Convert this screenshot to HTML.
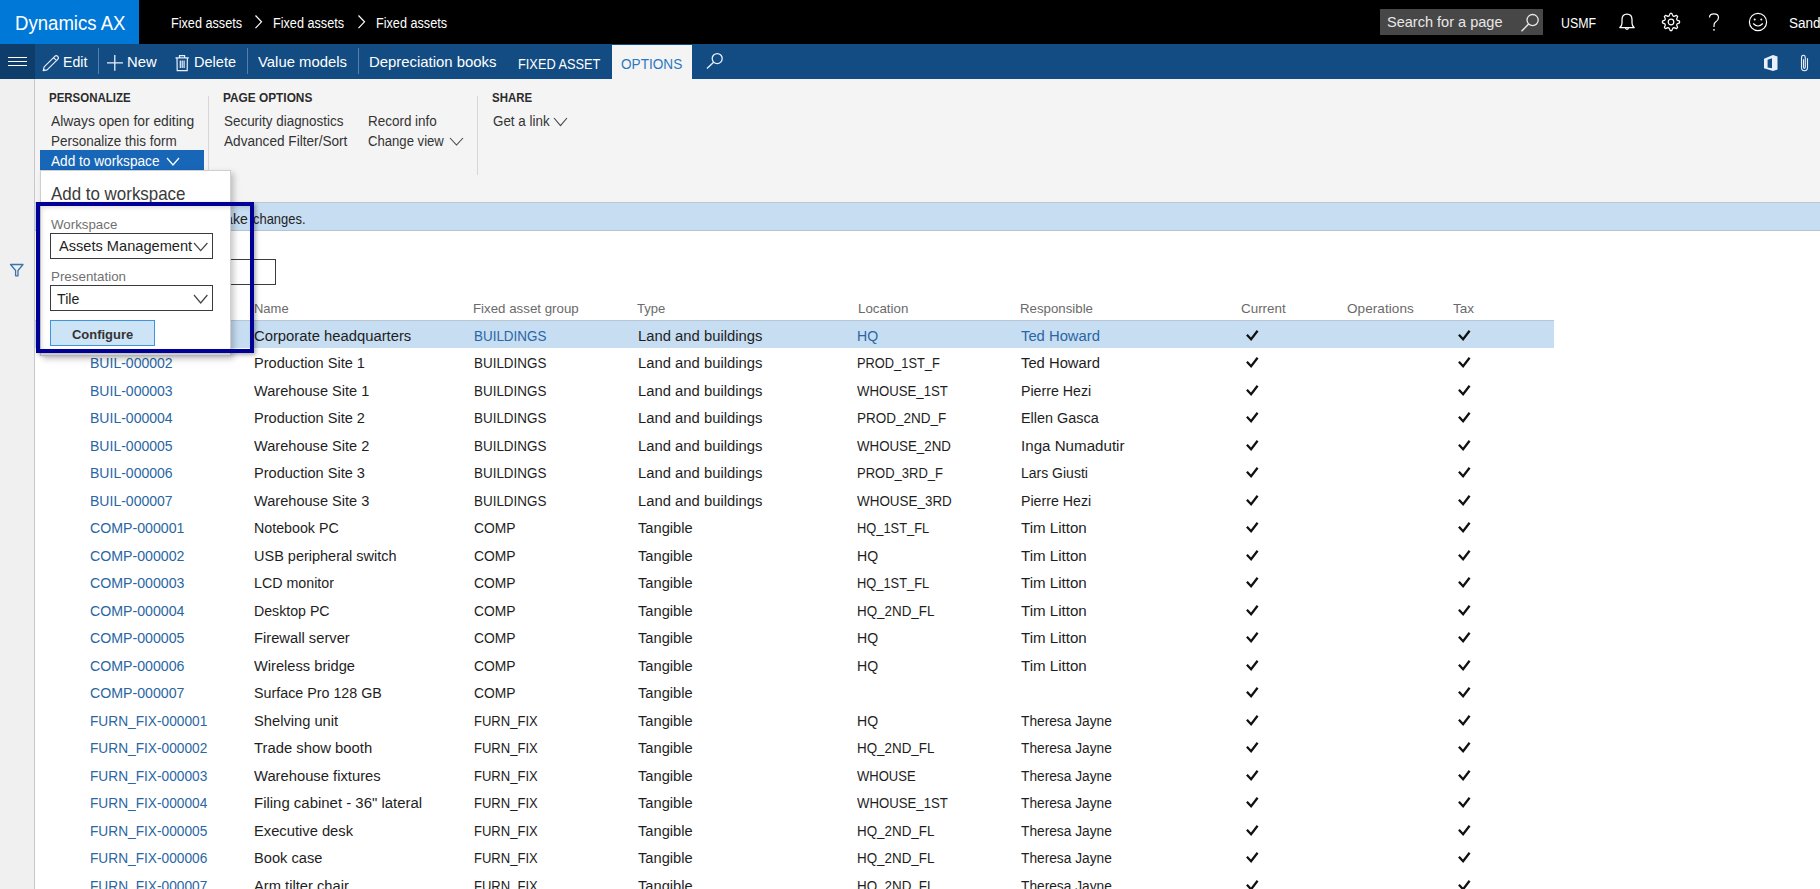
<!DOCTYPE html>
<html><head><meta charset="utf-8">
<style>
*{margin:0;padding:0;box-sizing:border-box}
html,body{width:1820px;height:889px;overflow:hidden;background:#fff;font-family:"Liberation Sans",sans-serif;color:#222}
.a{position:absolute;white-space:nowrap}
svg.a{display:block;overflow:visible}

</style></head><body>
<div class="a" style="left:0px;top:0px;width:1820px;height:44px;background:#000;"></div>
<div class="a" style="left:0px;top:0px;width:139px;height:44px;background:#0078d7;"></div>
<div class="a" style="left:14.50px;top:10.57px;font-size:20px;line-height:25px;transform:scaleX(0.9291);transform-origin:0 0;color:#fff;">Dynamics AX</div>
<div class="a" style="left:170.60px;top:14.15px;font-size:14px;line-height:18px;transform:scaleX(0.9035);transform-origin:0 0;color:#fff;">Fixed assets</div>
<div class="a" style="left:273.40px;top:14.15px;font-size:14px;line-height:18px;transform:scaleX(0.9035);transform-origin:0 0;color:#fff;">Fixed assets</div>
<div class="a" style="left:376.40px;top:14.15px;font-size:14px;line-height:18px;transform:scaleX(0.9035);transform-origin:0 0;color:#fff;">Fixed assets</div>
<svg class="a" style="left:253.5px;top:14px;" width="9" height="16" viewBox="0 0 9 16"><path d="M1.5 1.5 L7.5 7.8 L1.5 14.2" fill="none" stroke="#fff" stroke-width="1.2"/></svg>
<svg class="a" style="left:356.5px;top:14px;" width="9" height="16" viewBox="0 0 9 16"><path d="M1.5 1.5 L7.5 7.8 L1.5 14.2" fill="none" stroke="#fff" stroke-width="1.2"/></svg>
<div class="a" style="left:1380px;top:9px;width:163px;height:26px;background:#474747;"></div>
<div class="a" style="left:1386.50px;top:12.30px;font-size:15px;line-height:19px;transform:scaleX(0.9686);transform-origin:0 0;color:#e8e8e8;">Search for a page</div>
<svg class="a" style="left:1518px;top:11px;" width="22" height="22" viewBox="0 0 22 22"><circle cx="14.6" cy="9.1" r="5.6" fill="none" stroke="#e8e8e8" stroke-width="1.3"/><path d="M10.6 13.1 L3.5 20.2" stroke="#e8e8e8" stroke-width="1.4"/></svg>
<div class="a" style="left:1561.00px;top:14.15px;font-size:14px;line-height:18px;transform:scaleX(0.8824);transform-origin:0 0;color:#fff;">USMF</div>
<svg class="a" style="left:1617px;top:11px;" width="20" height="22" viewBox="0 0 20 22"><path d="M2.8 16.6 Q5 15.2 5 12 L5 8.6 Q5 3.2 10 3.2 Q15 3.2 15 8.6 L15 12 Q15 15.2 17.2 16.6 Z" fill="none" stroke="#fff" stroke-width="1.25" stroke-linejoin="round"/><path d="M8.4 17.2 Q10 19.6 11.6 17.2" fill="none" stroke="#fff" stroke-width="1.25"/></svg>
<svg class="a" style="left:1661px;top:12px;" width="20" height="20" viewBox="0 0 20 20"><polygon points="9.16,1.44 10.84,1.44 11.86,3.88 13.02,4.36 15.46,3.35 16.65,4.54 15.64,6.98 16.12,8.14 18.56,9.16 18.56,10.84 16.12,11.86 15.64,13.02 16.65,15.46 15.46,16.65 13.02,15.64 11.86,16.12 10.84,18.56 9.16,18.56 8.14,16.12 6.98,15.64 4.54,16.65 3.35,15.46 4.36,13.02 3.88,11.86 1.44,10.84 1.44,9.16 3.88,8.14 4.36,6.98 3.35,4.54 4.54,3.35 6.98,4.36 8.14,3.88" fill="none" stroke="#fff" stroke-width="1.2" stroke-linejoin="round"/><circle cx="10" cy="10" r="2.8" fill="none" stroke="#fff" stroke-width="1.2"/></svg>
<svg class="a" style="left:1706px;top:12px;" width="16" height="20" viewBox="0 0 16 20"><path d="M3.5 5.5 Q3.5 1.8 8 1.8 Q12.5 1.8 12.5 5.6 Q12.5 8.2 9.6 10 Q8 11 8 13.5 L8 15" fill="none" stroke="#fff" stroke-width="1.2"/><circle cx="8" cy="17.8" r="0.9" fill="#fff"/></svg>
<svg class="a" style="left:1748px;top:12px;" width="20" height="20" viewBox="0 0 20 20"><circle cx="10" cy="10" r="8.6" fill="none" stroke="#fff" stroke-width="1.2"/><circle cx="6.7" cy="7.6" r="1" fill="#fff"/><circle cx="13.3" cy="7.6" r="1" fill="#fff"/><path d="M5.2 11.5 Q10 16.5 14.8 11.5" fill="none" stroke="#fff" stroke-width="1.2"/></svg>
<div class="a" style="left:1788.80px;top:14.15px;font-size:14px;line-height:18px;transform:scaleX(0.9644);transform-origin:0 0;color:#fff;">Sandy</div>
<div class="a" style="left:0px;top:44px;width:1820px;height:35px;background:#134c83;"></div>
<div class="a" style="left:0px;top:44px;width:35px;height:35px;background:#0f3d6b;"></div>
<div class="a" style="left:8px;top:57.0px;width:19px;height:1.3px;background:#fff;"></div>
<div class="a" style="left:8px;top:60.9px;width:19px;height:1.3px;background:#fff;"></div>
<div class="a" style="left:8px;top:64.9px;width:19px;height:1.3px;background:#fff;"></div>
<svg class="a" style="left:41px;top:53px;" width="20" height="20" viewBox="0 0 20 20"><g transform="translate(2.2,17.7) rotate(-44.5)"><path d="M0 0 L3.4 -2.1 L18.3 -2.1 Q20.4 -2.1 20.4 0 Q20.4 2.1 18.3 2.1 L3.4 2.1 Z M16.6 -2.1 L16.6 2.1" fill="none" stroke="#e8f0ff" stroke-width="1.15" stroke-linejoin="round"/><path d="M0 0 L2 -1.2 L2 1.2 Z" fill="#e8f0ff"/></g></svg>
<div class="a" style="left:63.30px;top:52.20px;font-size:15px;line-height:19px;transform:scaleX(0.9401);transform-origin:0 0;color:#fff;">Edit</div>
<div class="a" style="left:98px;top:48px;width:1px;height:26px;background:#5281ad;"></div>
<svg class="a" style="left:105px;top:53px;" width="20" height="20" viewBox="0 0 20 20"><path d="M2 9.8 L18 9.8 M9.8 2 L9.8 17.8" stroke="#e8f0ff" stroke-width="1.3"/></svg>
<div class="a" style="left:126.60px;top:52.20px;font-size:15px;line-height:19px;transform:scaleX(0.9864);transform-origin:0 0;color:#fff;">New</div>
<svg class="a" style="left:174px;top:53px;" width="16" height="20" viewBox="0 0 16 20"><path d="M1.5 4.8 L14.8 4.8 M5.5 4.8 L5.5 2.6 L10.6 2.6 L10.6 4.8 M3 4.8 L3.2 17.6 L13.2 17.6 L13.4 4.8 M6.3 7.5 L6.3 15 M8.2 7.5 L8.2 15 M10.1 7.5 L10.1 15" fill="none" stroke="#e8f0ff" stroke-width="1.2"/></svg>
<div class="a" style="left:194.40px;top:52.20px;font-size:15px;line-height:19px;transform:scaleX(0.9686);transform-origin:0 0;color:#fff;">Delete</div>
<div class="a" style="left:247px;top:48px;width:1px;height:26px;background:#5281ad;"></div>
<div class="a" style="left:258.10px;top:52.20px;font-size:15px;line-height:19px;transform:scaleX(0.9914);transform-origin:0 0;color:#fff;">Value models</div>
<div class="a" style="left:357.5px;top:48px;width:1px;height:26px;background:#5281ad;"></div>
<div class="a" style="left:369.10px;top:52.20px;font-size:15px;line-height:19px;transform:scaleX(0.9929);transform-origin:0 0;color:#fff;">Depreciation books</div>
<div class="a" style="left:517.80px;top:55.15px;font-size:14px;line-height:18px;transform:scaleX(0.9130);transform-origin:0 0;color:#fff;">FIXED ASSET</div>
<div class="a" style="left:612px;top:45px;width:80px;height:34px;background:#f4f4f4;"></div>
<div class="a" style="left:621.00px;top:55.15px;font-size:14px;line-height:18px;transform:scaleX(0.9713);transform-origin:0 0;color:#2a78c2;">OPTIONS</div>
<svg class="a" style="left:704px;top:50px;" width="22" height="22" viewBox="0 0 22 22"><circle cx="13.2" cy="8.6" r="5.0" fill="none" stroke="#e8f0ff" stroke-width="1.3"/><path d="M9.6 12.2 L3 18.4" stroke="#e8f0ff" stroke-width="1.4"/></svg>
<svg class="a" style="left:1762px;top:53px;" width="18" height="20" viewBox="0 0 18 20"><path fill="#e8f0ff" fill-rule="evenodd" d="M2 5.8 L11 2 L15.5 3.4 L15.5 16.6 L11 18 L2 15.3 Z M5.6 6.8 L10 5.3 L10 15.2 L5.6 14.4 Z"/></svg>
<svg class="a" style="left:1799px;top:53px;" width="12" height="20" viewBox="0 0 12 20"><path d="M8.5 5.2 L8.5 14.5 Q8.5 17.7 5.5 17.7 Q2.5 17.7 2.5 14.5 L2.5 5 Q2.5 2.2 4.4 2.2 Q6.3 2.2 6.3 5 L6.3 13.8 Q6.3 15.4 5.4 15.4 Q4.5 15.4 4.5 13.8 L4.5 6.3" fill="none" stroke="#e8f0ff" stroke-width="1.1"/></svg>
<div class="a" style="left:0px;top:79px;width:1820px;height:123px;background:#f4f4f4;"></div>
<div class="a" style="left:0px;top:79px;width:34px;height:810px;background:#f0f0f0;"></div>
<div class="a" style="left:34px;top:79px;width:1px;height:810px;background:#c8c8c8;"></div>
<div class="a" style="left:49.30px;top:89.67px;font-size:12.5px;line-height:16px;transform:scaleX(0.9190);transform-origin:0 0;color:#2b2b2b;font-weight:bold;">PERSONALIZE</div>
<div class="a" style="left:50.60px;top:112.15px;font-size:14px;line-height:18px;transform:scaleX(0.9893);transform-origin:0 0;color:#333;">Always open for editing</div>
<div class="a" style="left:50.60px;top:132.15px;font-size:14px;line-height:18px;transform:scaleX(0.9616);transform-origin:0 0;color:#333;">Personalize this form</div>
<div class="a" style="left:40px;top:150px;width:164px;height:20px;background:#1766b8;"></div>
<div class="a" style="left:50.60px;top:152.15px;font-size:14px;line-height:18px;transform:scaleX(0.9750);transform-origin:0 0;color:#fff;">Add to workspace</div>
<svg class="a" style="left:165.5px;top:157.2px;" width="14" height="9" viewBox="0 0 14 9"><path d="M1 1 L7.0 8 L13 1" fill="none" stroke="#fff" stroke-width="1.3"/></svg>
<div class="a" style="left:207.5px;top:96px;width:1px;height:79px;background:#d6d6d6;"></div>
<div class="a" style="left:223.00px;top:89.67px;font-size:12.5px;line-height:16px;transform:scaleX(0.9477);transform-origin:0 0;color:#2b2b2b;font-weight:bold;">PAGE OPTIONS</div>
<div class="a" style="left:224.00px;top:112.15px;font-size:14px;line-height:18px;transform:scaleX(0.9590);transform-origin:0 0;color:#333;">Security diagnostics</div>
<div class="a" style="left:224.00px;top:132.15px;font-size:14px;line-height:18px;transform:scaleX(0.9729);transform-origin:0 0;color:#333;">Advanced Filter/Sort</div>
<div class="a" style="left:368.40px;top:112.15px;font-size:14px;line-height:18px;transform:scaleX(0.9610);transform-origin:0 0;color:#333;">Record info</div>
<div class="a" style="left:368.40px;top:132.15px;font-size:14px;line-height:18px;transform:scaleX(0.9365);transform-origin:0 0;color:#333;">Change view</div>
<svg class="a" style="left:448.9px;top:137.2px;" width="15" height="9" viewBox="0 0 15 9"><path d="M1 1 L7.5 8 L14 1" fill="none" stroke="#444" stroke-width="1.1"/></svg>
<div class="a" style="left:477px;top:96px;width:1px;height:79px;background:#d6d6d6;"></div>
<div class="a" style="left:491.80px;top:89.67px;font-size:12.5px;line-height:16px;transform:scaleX(0.9164);transform-origin:0 0;color:#2b2b2b;font-weight:bold;">SHARE</div>
<div class="a" style="left:493.40px;top:112.15px;font-size:14px;line-height:18px;transform:scaleX(0.9571);transform-origin:0 0;color:#333;">Get a link</div>
<svg class="a" style="left:553.2px;top:116.5px;" width="15" height="9.6" viewBox="0 0 15 9.6"><path d="M1 1 L7.5 8.6 L14 1" fill="none" stroke="#444" stroke-width="1.1"/></svg>
<div class="a" style="left:35px;top:202px;width:1785px;height:28px;background:#c7ddf2;"></div>
<div class="a" style="left:35px;top:229.5px;width:1785px;height:1px;background:#b4c4d2;"></div>
<div class="a" style="left:35px;top:202px;width:1785px;height:1px;background:#bcc6d0;"></div>
<div class="a" style="left:253.00px;top:209.97px;font-size:14.5px;line-height:18px;transform:scaleX(0.8921);transform-origin:0 0;color:#222;">changes.</div>
<div class="a" style="left:134.70px;top:209.97px;font-size:14.5px;line-height:18px;transform:scaleX(0.9721);transform-origin:0 0;color:#222;">Click Edit to make</div>
<div class="a" style="left:35px;top:231px;width:1785px;height:658px;background:#fff;"></div>
<svg class="a" style="left:9px;top:263px;" width="16" height="15" viewBox="0 0 16 15"><path d="M1.5 1.5 L14 1.5 L9 7.5 L9 12.8 L6.6 12.8 L6.6 7.5 Z" fill="none" stroke="#3a74ad" stroke-width="1.3" stroke-linejoin="round"/></svg>
<div class="a" style="left:50px;top:259px;width:226px;height:26px;background:#fff;border:1px solid #3c3c3c;"></div>
<div class="a" style="left:254.40px;top:299.82px;font-size:13.5px;line-height:17px;transform:scaleX(0.9608);transform-origin:0 0;color:#6a6a6a;">Name</div>
<div class="a" style="left:473.40px;top:299.82px;font-size:13.5px;line-height:17px;transform:scaleX(0.9850);transform-origin:0 0;color:#6a6a6a;">Fixed asset group</div>
<div class="a" style="left:637.40px;top:299.82px;font-size:13.5px;line-height:17px;transform:scaleX(0.9669);transform-origin:0 0;color:#6a6a6a;">Type</div>
<div class="a" style="left:857.70px;top:299.82px;font-size:13.5px;line-height:17px;transform:scaleX(0.9855);transform-origin:0 0;color:#6a6a6a;">Location</div>
<div class="a" style="left:1020.40px;top:299.82px;font-size:13.5px;line-height:17px;transform:scaleX(0.9825);transform-origin:0 0;color:#6a6a6a;">Responsible</div>
<div class="a" style="left:1240.90px;top:299.82px;font-size:13.5px;line-height:17px;transform:scaleX(0.9930);transform-origin:0 0;color:#6a6a6a;">Current</div>
<div class="a" style="left:1347.00px;top:299.82px;font-size:13.5px;line-height:17px;letter-spacing:0.085px;color:#6a6a6a;">Operations</div>
<div class="a" style="left:1452.60px;top:299.82px;font-size:13.5px;line-height:17px;transform:scaleX(0.9996);transform-origin:0 0;color:#6a6a6a;">Tax</div>
<div class="a" style="left:35px;top:320px;width:1519px;height:28px;background:#c6ddf2;"></div>
<div class="a" style="left:35px;top:320px;width:1519px;height:1px;background:#b6c6d6;"></div>
<div class="a" style="left:90.00px;top:325.83px;font-size:15.5px;line-height:19px;transform:scaleX(0.9051);transform-origin:0 0;color:#2a66a3;">BUIL-000001</div>
<div class="a" style="left:253.90px;top:325.83px;font-size:15.5px;line-height:19px;transform:scaleX(0.9556);transform-origin:0 0;color:#1e1e1e;">Corporate headquarters</div>
<div class="a" style="left:473.80px;top:325.83px;font-size:15.5px;line-height:19px;transform:scaleX(0.8666);transform-origin:0 0;color:#2a66a3;">BUILDINGS</div>
<div class="a" style="left:637.70px;top:325.83px;font-size:15.5px;line-height:19px;transform:scaleX(0.9560);transform-origin:0 0;color:#1e1e1e;">Land and buildings</div>
<div class="a" style="left:857.40px;top:325.83px;font-size:15.5px;line-height:19px;transform:scaleX(0.9075);transform-origin:0 0;color:#2a66a3;">HQ</div>
<div class="a" style="left:1021.30px;top:325.83px;font-size:15.5px;line-height:19px;transform:scaleX(0.9541);transform-origin:0 0;color:#2a66a3;">Ted Howard</div>
<svg class="a" style="left:1246px;top:328.7px;" width="13" height="13" viewBox="0 0 13 13"><path d="M0.9 5.8 L5.1 10.2 L11.6 1.8" fill="none" stroke="#111" stroke-width="2.3"/></svg>
<svg class="a" style="left:1458.3px;top:328.7px;" width="13" height="13" viewBox="0 0 13 13"><path d="M0.9 5.8 L5.1 10.2 L11.6 1.8" fill="none" stroke="#111" stroke-width="2.3"/></svg>
<div class="a" style="left:90.00px;top:353.33px;font-size:15.5px;line-height:19px;transform:scaleX(0.9051);transform-origin:0 0;color:#2a66a3;">BUIL-000002</div>
<div class="a" style="left:253.90px;top:353.33px;font-size:15.5px;line-height:19px;transform:scaleX(0.9397);transform-origin:0 0;color:#1e1e1e;">Production Site 1</div>
<div class="a" style="left:473.80px;top:353.33px;font-size:15.5px;line-height:19px;transform:scaleX(0.8666);transform-origin:0 0;color:#1e1e1e;">BUILDINGS</div>
<div class="a" style="left:637.70px;top:353.33px;font-size:15.5px;line-height:19px;transform:scaleX(0.9560);transform-origin:0 0;color:#1e1e1e;">Land and buildings</div>
<div class="a" style="left:857.40px;top:353.33px;font-size:15.5px;line-height:19px;transform:scaleX(0.8288);transform-origin:0 0;color:#1e1e1e;">PROD_1ST_F</div>
<div class="a" style="left:1021.30px;top:353.33px;font-size:15.5px;line-height:19px;transform:scaleX(0.9541);transform-origin:0 0;color:#1e1e1e;">Ted Howard</div>
<svg class="a" style="left:1246px;top:356.2px;" width="13" height="13" viewBox="0 0 13 13"><path d="M0.9 5.8 L5.1 10.2 L11.6 1.8" fill="none" stroke="#111" stroke-width="2.3"/></svg>
<svg class="a" style="left:1458.3px;top:356.2px;" width="13" height="13" viewBox="0 0 13 13"><path d="M0.9 5.8 L5.1 10.2 L11.6 1.8" fill="none" stroke="#111" stroke-width="2.3"/></svg>
<div class="a" style="left:90.00px;top:380.83px;font-size:15.5px;line-height:19px;transform:scaleX(0.9051);transform-origin:0 0;color:#2a66a3;">BUIL-000003</div>
<div class="a" style="left:253.90px;top:380.83px;font-size:15.5px;line-height:19px;transform:scaleX(0.9407);transform-origin:0 0;color:#1e1e1e;">Warehouse Site 1</div>
<div class="a" style="left:473.80px;top:380.83px;font-size:15.5px;line-height:19px;transform:scaleX(0.8666);transform-origin:0 0;color:#1e1e1e;">BUILDINGS</div>
<div class="a" style="left:637.70px;top:380.83px;font-size:15.5px;line-height:19px;transform:scaleX(0.9560);transform-origin:0 0;color:#1e1e1e;">Land and buildings</div>
<div class="a" style="left:857.40px;top:380.83px;font-size:15.5px;line-height:19px;transform:scaleX(0.8502);transform-origin:0 0;color:#1e1e1e;">WHOUSE_1ST</div>
<div class="a" style="left:1021.30px;top:380.83px;font-size:15.5px;line-height:19px;transform:scaleX(0.9146);transform-origin:0 0;color:#1e1e1e;">Pierre Hezi</div>
<svg class="a" style="left:1246px;top:383.7px;" width="13" height="13" viewBox="0 0 13 13"><path d="M0.9 5.8 L5.1 10.2 L11.6 1.8" fill="none" stroke="#111" stroke-width="2.3"/></svg>
<svg class="a" style="left:1458.3px;top:383.7px;" width="13" height="13" viewBox="0 0 13 13"><path d="M0.9 5.8 L5.1 10.2 L11.6 1.8" fill="none" stroke="#111" stroke-width="2.3"/></svg>
<div class="a" style="left:90.00px;top:408.33px;font-size:15.5px;line-height:19px;transform:scaleX(0.9051);transform-origin:0 0;color:#2a66a3;">BUIL-000004</div>
<div class="a" style="left:253.90px;top:408.33px;font-size:15.5px;line-height:19px;transform:scaleX(0.9397);transform-origin:0 0;color:#1e1e1e;">Production Site 2</div>
<div class="a" style="left:473.80px;top:408.33px;font-size:15.5px;line-height:19px;transform:scaleX(0.8666);transform-origin:0 0;color:#1e1e1e;">BUILDINGS</div>
<div class="a" style="left:637.70px;top:408.33px;font-size:15.5px;line-height:19px;transform:scaleX(0.9560);transform-origin:0 0;color:#1e1e1e;">Land and buildings</div>
<div class="a" style="left:857.40px;top:408.33px;font-size:15.5px;line-height:19px;transform:scaleX(0.8697);transform-origin:0 0;color:#1e1e1e;">PROD_2ND_F</div>
<div class="a" style="left:1021.30px;top:408.33px;font-size:15.5px;line-height:19px;transform:scaleX(0.9293);transform-origin:0 0;color:#1e1e1e;">Ellen Gasca</div>
<svg class="a" style="left:1246px;top:411.2px;" width="13" height="13" viewBox="0 0 13 13"><path d="M0.9 5.8 L5.1 10.2 L11.6 1.8" fill="none" stroke="#111" stroke-width="2.3"/></svg>
<svg class="a" style="left:1458.3px;top:411.2px;" width="13" height="13" viewBox="0 0 13 13"><path d="M0.9 5.8 L5.1 10.2 L11.6 1.8" fill="none" stroke="#111" stroke-width="2.3"/></svg>
<div class="a" style="left:90.00px;top:435.83px;font-size:15.5px;line-height:19px;transform:scaleX(0.9051);transform-origin:0 0;color:#2a66a3;">BUIL-000005</div>
<div class="a" style="left:253.90px;top:435.83px;font-size:15.5px;line-height:19px;transform:scaleX(0.9407);transform-origin:0 0;color:#1e1e1e;">Warehouse Site 2</div>
<div class="a" style="left:473.80px;top:435.83px;font-size:15.5px;line-height:19px;transform:scaleX(0.8666);transform-origin:0 0;color:#1e1e1e;">BUILDINGS</div>
<div class="a" style="left:637.70px;top:435.83px;font-size:15.5px;line-height:19px;transform:scaleX(0.9560);transform-origin:0 0;color:#1e1e1e;">Land and buildings</div>
<div class="a" style="left:857.40px;top:435.83px;font-size:15.5px;line-height:19px;transform:scaleX(0.8582);transform-origin:0 0;color:#1e1e1e;">WHOUSE_2ND</div>
<div class="a" style="left:1021.30px;top:435.83px;font-size:15.5px;line-height:19px;transform:scaleX(0.9769);transform-origin:0 0;color:#1e1e1e;">Inga Numadutir</div>
<svg class="a" style="left:1246px;top:438.7px;" width="13" height="13" viewBox="0 0 13 13"><path d="M0.9 5.8 L5.1 10.2 L11.6 1.8" fill="none" stroke="#111" stroke-width="2.3"/></svg>
<svg class="a" style="left:1458.3px;top:438.7px;" width="13" height="13" viewBox="0 0 13 13"><path d="M0.9 5.8 L5.1 10.2 L11.6 1.8" fill="none" stroke="#111" stroke-width="2.3"/></svg>
<div class="a" style="left:90.00px;top:463.33px;font-size:15.5px;line-height:19px;transform:scaleX(0.9051);transform-origin:0 0;color:#2a66a3;">BUIL-000006</div>
<div class="a" style="left:253.90px;top:463.33px;font-size:15.5px;line-height:19px;transform:scaleX(0.9397);transform-origin:0 0;color:#1e1e1e;">Production Site 3</div>
<div class="a" style="left:473.80px;top:463.33px;font-size:15.5px;line-height:19px;transform:scaleX(0.8666);transform-origin:0 0;color:#1e1e1e;">BUILDINGS</div>
<div class="a" style="left:637.70px;top:463.33px;font-size:15.5px;line-height:19px;transform:scaleX(0.9560);transform-origin:0 0;color:#1e1e1e;">Land and buildings</div>
<div class="a" style="left:857.40px;top:463.33px;font-size:15.5px;line-height:19px;transform:scaleX(0.8388);transform-origin:0 0;color:#1e1e1e;">PROD_3RD_F</div>
<div class="a" style="left:1021.30px;top:463.33px;font-size:15.5px;line-height:19px;transform:scaleX(0.9030);transform-origin:0 0;color:#1e1e1e;">Lars Giusti</div>
<svg class="a" style="left:1246px;top:466.2px;" width="13" height="13" viewBox="0 0 13 13"><path d="M0.9 5.8 L5.1 10.2 L11.6 1.8" fill="none" stroke="#111" stroke-width="2.3"/></svg>
<svg class="a" style="left:1458.3px;top:466.2px;" width="13" height="13" viewBox="0 0 13 13"><path d="M0.9 5.8 L5.1 10.2 L11.6 1.8" fill="none" stroke="#111" stroke-width="2.3"/></svg>
<div class="a" style="left:90.00px;top:490.83px;font-size:15.5px;line-height:19px;transform:scaleX(0.9051);transform-origin:0 0;color:#2a66a3;">BUIL-000007</div>
<div class="a" style="left:253.90px;top:490.83px;font-size:15.5px;line-height:19px;transform:scaleX(0.9407);transform-origin:0 0;color:#1e1e1e;">Warehouse Site 3</div>
<div class="a" style="left:473.80px;top:490.83px;font-size:15.5px;line-height:19px;transform:scaleX(0.8666);transform-origin:0 0;color:#1e1e1e;">BUILDINGS</div>
<div class="a" style="left:637.70px;top:490.83px;font-size:15.5px;line-height:19px;transform:scaleX(0.9560);transform-origin:0 0;color:#1e1e1e;">Land and buildings</div>
<div class="a" style="left:857.40px;top:490.83px;font-size:15.5px;line-height:19px;transform:scaleX(0.8669);transform-origin:0 0;color:#1e1e1e;">WHOUSE_3RD</div>
<div class="a" style="left:1021.30px;top:490.83px;font-size:15.5px;line-height:19px;transform:scaleX(0.9146);transform-origin:0 0;color:#1e1e1e;">Pierre Hezi</div>
<svg class="a" style="left:1246px;top:493.7px;" width="13" height="13" viewBox="0 0 13 13"><path d="M0.9 5.8 L5.1 10.2 L11.6 1.8" fill="none" stroke="#111" stroke-width="2.3"/></svg>
<svg class="a" style="left:1458.3px;top:493.7px;" width="13" height="13" viewBox="0 0 13 13"><path d="M0.9 5.8 L5.1 10.2 L11.6 1.8" fill="none" stroke="#111" stroke-width="2.3"/></svg>
<div class="a" style="left:90.00px;top:518.33px;font-size:15.5px;line-height:19px;transform:scaleX(0.9141);transform-origin:0 0;color:#2a66a3;">COMP-000001</div>
<div class="a" style="left:253.90px;top:518.33px;font-size:15.5px;line-height:19px;transform:scaleX(0.9187);transform-origin:0 0;color:#1e1e1e;">Notebook PC</div>
<div class="a" style="left:473.80px;top:518.33px;font-size:15.5px;line-height:19px;transform:scaleX(0.8925);transform-origin:0 0;color:#1e1e1e;">COMP</div>
<div class="a" style="left:637.70px;top:518.33px;font-size:15.5px;line-height:19px;transform:scaleX(0.9474);transform-origin:0 0;color:#1e1e1e;">Tangible</div>
<div class="a" style="left:857.40px;top:518.33px;font-size:15.5px;line-height:19px;transform:scaleX(0.8296);transform-origin:0 0;color:#1e1e1e;">HQ_1ST_FL</div>
<div class="a" style="left:1021.30px;top:518.33px;font-size:15.5px;line-height:19px;transform:scaleX(0.9748);transform-origin:0 0;color:#1e1e1e;">Tim Litton</div>
<svg class="a" style="left:1246px;top:521.2px;" width="13" height="13" viewBox="0 0 13 13"><path d="M0.9 5.8 L5.1 10.2 L11.6 1.8" fill="none" stroke="#111" stroke-width="2.3"/></svg>
<svg class="a" style="left:1458.3px;top:521.2px;" width="13" height="13" viewBox="0 0 13 13"><path d="M0.9 5.8 L5.1 10.2 L11.6 1.8" fill="none" stroke="#111" stroke-width="2.3"/></svg>
<div class="a" style="left:90.00px;top:545.83px;font-size:15.5px;line-height:19px;transform:scaleX(0.9141);transform-origin:0 0;color:#2a66a3;">COMP-000002</div>
<div class="a" style="left:253.90px;top:545.83px;font-size:15.5px;line-height:19px;transform:scaleX(0.9350);transform-origin:0 0;color:#1e1e1e;">USB peripheral switch</div>
<div class="a" style="left:473.80px;top:545.83px;font-size:15.5px;line-height:19px;transform:scaleX(0.8925);transform-origin:0 0;color:#1e1e1e;">COMP</div>
<div class="a" style="left:637.70px;top:545.83px;font-size:15.5px;line-height:19px;transform:scaleX(0.9474);transform-origin:0 0;color:#1e1e1e;">Tangible</div>
<div class="a" style="left:857.40px;top:545.83px;font-size:15.5px;line-height:19px;transform:scaleX(0.9075);transform-origin:0 0;color:#1e1e1e;">HQ</div>
<div class="a" style="left:1021.30px;top:545.83px;font-size:15.5px;line-height:19px;transform:scaleX(0.9748);transform-origin:0 0;color:#1e1e1e;">Tim Litton</div>
<svg class="a" style="left:1246px;top:548.7px;" width="13" height="13" viewBox="0 0 13 13"><path d="M0.9 5.8 L5.1 10.2 L11.6 1.8" fill="none" stroke="#111" stroke-width="2.3"/></svg>
<svg class="a" style="left:1458.3px;top:548.7px;" width="13" height="13" viewBox="0 0 13 13"><path d="M0.9 5.8 L5.1 10.2 L11.6 1.8" fill="none" stroke="#111" stroke-width="2.3"/></svg>
<div class="a" style="left:90.00px;top:573.33px;font-size:15.5px;line-height:19px;transform:scaleX(0.9141);transform-origin:0 0;color:#2a66a3;">COMP-000003</div>
<div class="a" style="left:253.90px;top:573.33px;font-size:15.5px;line-height:19px;transform:scaleX(0.9185);transform-origin:0 0;color:#1e1e1e;">LCD monitor</div>
<div class="a" style="left:473.80px;top:573.33px;font-size:15.5px;line-height:19px;transform:scaleX(0.8925);transform-origin:0 0;color:#1e1e1e;">COMP</div>
<div class="a" style="left:637.70px;top:573.33px;font-size:15.5px;line-height:19px;transform:scaleX(0.9474);transform-origin:0 0;color:#1e1e1e;">Tangible</div>
<div class="a" style="left:857.40px;top:573.33px;font-size:15.5px;line-height:19px;transform:scaleX(0.8296);transform-origin:0 0;color:#1e1e1e;">HQ_1ST_FL</div>
<div class="a" style="left:1021.30px;top:573.33px;font-size:15.5px;line-height:19px;transform:scaleX(0.9748);transform-origin:0 0;color:#1e1e1e;">Tim Litton</div>
<svg class="a" style="left:1246px;top:576.2px;" width="13" height="13" viewBox="0 0 13 13"><path d="M0.9 5.8 L5.1 10.2 L11.6 1.8" fill="none" stroke="#111" stroke-width="2.3"/></svg>
<svg class="a" style="left:1458.3px;top:576.2px;" width="13" height="13" viewBox="0 0 13 13"><path d="M0.9 5.8 L5.1 10.2 L11.6 1.8" fill="none" stroke="#111" stroke-width="2.3"/></svg>
<div class="a" style="left:90.00px;top:600.83px;font-size:15.5px;line-height:19px;transform:scaleX(0.9141);transform-origin:0 0;color:#2a66a3;">COMP-000004</div>
<div class="a" style="left:253.90px;top:600.83px;font-size:15.5px;line-height:19px;transform:scaleX(0.9137);transform-origin:0 0;color:#1e1e1e;">Desktop PC</div>
<div class="a" style="left:473.80px;top:600.83px;font-size:15.5px;line-height:19px;transform:scaleX(0.8925);transform-origin:0 0;color:#1e1e1e;">COMP</div>
<div class="a" style="left:637.70px;top:600.83px;font-size:15.5px;line-height:19px;transform:scaleX(0.9474);transform-origin:0 0;color:#1e1e1e;">Tangible</div>
<div class="a" style="left:857.40px;top:600.83px;font-size:15.5px;line-height:19px;transform:scaleX(0.8639);transform-origin:0 0;color:#1e1e1e;">HQ_2ND_FL</div>
<div class="a" style="left:1021.30px;top:600.83px;font-size:15.5px;line-height:19px;transform:scaleX(0.9748);transform-origin:0 0;color:#1e1e1e;">Tim Litton</div>
<svg class="a" style="left:1246px;top:603.7px;" width="13" height="13" viewBox="0 0 13 13"><path d="M0.9 5.8 L5.1 10.2 L11.6 1.8" fill="none" stroke="#111" stroke-width="2.3"/></svg>
<svg class="a" style="left:1458.3px;top:603.7px;" width="13" height="13" viewBox="0 0 13 13"><path d="M0.9 5.8 L5.1 10.2 L11.6 1.8" fill="none" stroke="#111" stroke-width="2.3"/></svg>
<div class="a" style="left:90.00px;top:628.33px;font-size:15.5px;line-height:19px;transform:scaleX(0.9141);transform-origin:0 0;color:#2a66a3;">COMP-000005</div>
<div class="a" style="left:253.90px;top:628.33px;font-size:15.5px;line-height:19px;transform:scaleX(0.9505);transform-origin:0 0;color:#1e1e1e;">Firewall server</div>
<div class="a" style="left:473.80px;top:628.33px;font-size:15.5px;line-height:19px;transform:scaleX(0.8925);transform-origin:0 0;color:#1e1e1e;">COMP</div>
<div class="a" style="left:637.70px;top:628.33px;font-size:15.5px;line-height:19px;transform:scaleX(0.9474);transform-origin:0 0;color:#1e1e1e;">Tangible</div>
<div class="a" style="left:857.40px;top:628.33px;font-size:15.5px;line-height:19px;transform:scaleX(0.9075);transform-origin:0 0;color:#1e1e1e;">HQ</div>
<div class="a" style="left:1021.30px;top:628.33px;font-size:15.5px;line-height:19px;transform:scaleX(0.9748);transform-origin:0 0;color:#1e1e1e;">Tim Litton</div>
<svg class="a" style="left:1246px;top:631.2px;" width="13" height="13" viewBox="0 0 13 13"><path d="M0.9 5.8 L5.1 10.2 L11.6 1.8" fill="none" stroke="#111" stroke-width="2.3"/></svg>
<svg class="a" style="left:1458.3px;top:631.2px;" width="13" height="13" viewBox="0 0 13 13"><path d="M0.9 5.8 L5.1 10.2 L11.6 1.8" fill="none" stroke="#111" stroke-width="2.3"/></svg>
<div class="a" style="left:90.00px;top:655.83px;font-size:15.5px;line-height:19px;transform:scaleX(0.9141);transform-origin:0 0;color:#2a66a3;">COMP-000006</div>
<div class="a" style="left:253.90px;top:655.83px;font-size:15.5px;line-height:19px;transform:scaleX(0.9452);transform-origin:0 0;color:#1e1e1e;">Wireless bridge</div>
<div class="a" style="left:473.80px;top:655.83px;font-size:15.5px;line-height:19px;transform:scaleX(0.8925);transform-origin:0 0;color:#1e1e1e;">COMP</div>
<div class="a" style="left:637.70px;top:655.83px;font-size:15.5px;line-height:19px;transform:scaleX(0.9474);transform-origin:0 0;color:#1e1e1e;">Tangible</div>
<div class="a" style="left:857.40px;top:655.83px;font-size:15.5px;line-height:19px;transform:scaleX(0.9075);transform-origin:0 0;color:#1e1e1e;">HQ</div>
<div class="a" style="left:1021.30px;top:655.83px;font-size:15.5px;line-height:19px;transform:scaleX(0.9748);transform-origin:0 0;color:#1e1e1e;">Tim Litton</div>
<svg class="a" style="left:1246px;top:658.7px;" width="13" height="13" viewBox="0 0 13 13"><path d="M0.9 5.8 L5.1 10.2 L11.6 1.8" fill="none" stroke="#111" stroke-width="2.3"/></svg>
<svg class="a" style="left:1458.3px;top:658.7px;" width="13" height="13" viewBox="0 0 13 13"><path d="M0.9 5.8 L5.1 10.2 L11.6 1.8" fill="none" stroke="#111" stroke-width="2.3"/></svg>
<div class="a" style="left:90.00px;top:683.33px;font-size:15.5px;line-height:19px;transform:scaleX(0.9141);transform-origin:0 0;color:#2a66a3;">COMP-000007</div>
<div class="a" style="left:253.90px;top:683.33px;font-size:15.5px;line-height:19px;transform:scaleX(0.9217);transform-origin:0 0;color:#1e1e1e;">Surface Pro 128 GB</div>
<div class="a" style="left:473.80px;top:683.33px;font-size:15.5px;line-height:19px;transform:scaleX(0.8925);transform-origin:0 0;color:#1e1e1e;">COMP</div>
<div class="a" style="left:637.70px;top:683.33px;font-size:15.5px;line-height:19px;transform:scaleX(0.9474);transform-origin:0 0;color:#1e1e1e;">Tangible</div>
<svg class="a" style="left:1246px;top:686.2px;" width="13" height="13" viewBox="0 0 13 13"><path d="M0.9 5.8 L5.1 10.2 L11.6 1.8" fill="none" stroke="#111" stroke-width="2.3"/></svg>
<svg class="a" style="left:1458.3px;top:686.2px;" width="13" height="13" viewBox="0 0 13 13"><path d="M0.9 5.8 L5.1 10.2 L11.6 1.8" fill="none" stroke="#111" stroke-width="2.3"/></svg>
<div class="a" style="left:90.00px;top:710.83px;font-size:15.5px;line-height:19px;transform:scaleX(0.8841);transform-origin:0 0;color:#2a66a3;">FURN_FIX-000001</div>
<div class="a" style="left:253.90px;top:710.83px;font-size:15.5px;line-height:19px;transform:scaleX(0.9477);transform-origin:0 0;color:#1e1e1e;">Shelving unit</div>
<div class="a" style="left:473.80px;top:710.83px;font-size:15.5px;line-height:19px;transform:scaleX(0.8404);transform-origin:0 0;color:#1e1e1e;">FURN_FIX</div>
<div class="a" style="left:637.70px;top:710.83px;font-size:15.5px;line-height:19px;transform:scaleX(0.9474);transform-origin:0 0;color:#1e1e1e;">Tangible</div>
<div class="a" style="left:857.40px;top:710.83px;font-size:15.5px;line-height:19px;transform:scaleX(0.9075);transform-origin:0 0;color:#1e1e1e;">HQ</div>
<div class="a" style="left:1021.30px;top:710.83px;font-size:15.5px;line-height:19px;transform:scaleX(0.8856);transform-origin:0 0;color:#1e1e1e;">Theresa Jayne</div>
<svg class="a" style="left:1246px;top:713.7px;" width="13" height="13" viewBox="0 0 13 13"><path d="M0.9 5.8 L5.1 10.2 L11.6 1.8" fill="none" stroke="#111" stroke-width="2.3"/></svg>
<svg class="a" style="left:1458.3px;top:713.7px;" width="13" height="13" viewBox="0 0 13 13"><path d="M0.9 5.8 L5.1 10.2 L11.6 1.8" fill="none" stroke="#111" stroke-width="2.3"/></svg>
<div class="a" style="left:90.00px;top:738.33px;font-size:15.5px;line-height:19px;transform:scaleX(0.8841);transform-origin:0 0;color:#2a66a3;">FURN_FIX-000002</div>
<div class="a" style="left:253.90px;top:738.33px;font-size:15.5px;line-height:19px;transform:scaleX(0.9571);transform-origin:0 0;color:#1e1e1e;">Trade show booth</div>
<div class="a" style="left:473.80px;top:738.33px;font-size:15.5px;line-height:19px;transform:scaleX(0.8404);transform-origin:0 0;color:#1e1e1e;">FURN_FIX</div>
<div class="a" style="left:637.70px;top:738.33px;font-size:15.5px;line-height:19px;transform:scaleX(0.9474);transform-origin:0 0;color:#1e1e1e;">Tangible</div>
<div class="a" style="left:857.40px;top:738.33px;font-size:15.5px;line-height:19px;transform:scaleX(0.8639);transform-origin:0 0;color:#1e1e1e;">HQ_2ND_FL</div>
<div class="a" style="left:1021.30px;top:738.33px;font-size:15.5px;line-height:19px;transform:scaleX(0.8856);transform-origin:0 0;color:#1e1e1e;">Theresa Jayne</div>
<svg class="a" style="left:1246px;top:741.2px;" width="13" height="13" viewBox="0 0 13 13"><path d="M0.9 5.8 L5.1 10.2 L11.6 1.8" fill="none" stroke="#111" stroke-width="2.3"/></svg>
<svg class="a" style="left:1458.3px;top:741.2px;" width="13" height="13" viewBox="0 0 13 13"><path d="M0.9 5.8 L5.1 10.2 L11.6 1.8" fill="none" stroke="#111" stroke-width="2.3"/></svg>
<div class="a" style="left:90.00px;top:765.83px;font-size:15.5px;line-height:19px;transform:scaleX(0.8841);transform-origin:0 0;color:#2a66a3;">FURN_FIX-000003</div>
<div class="a" style="left:253.90px;top:765.83px;font-size:15.5px;line-height:19px;transform:scaleX(0.9527);transform-origin:0 0;color:#1e1e1e;">Warehouse fixtures</div>
<div class="a" style="left:473.80px;top:765.83px;font-size:15.5px;line-height:19px;transform:scaleX(0.8404);transform-origin:0 0;color:#1e1e1e;">FURN_FIX</div>
<div class="a" style="left:637.70px;top:765.83px;font-size:15.5px;line-height:19px;transform:scaleX(0.9474);transform-origin:0 0;color:#1e1e1e;">Tangible</div>
<div class="a" style="left:857.40px;top:765.83px;font-size:15.5px;line-height:19px;transform:scaleX(0.8400);transform-origin:0 0;color:#1e1e1e;">WHOUSE</div>
<div class="a" style="left:1021.30px;top:765.83px;font-size:15.5px;line-height:19px;transform:scaleX(0.8856);transform-origin:0 0;color:#1e1e1e;">Theresa Jayne</div>
<svg class="a" style="left:1246px;top:768.7px;" width="13" height="13" viewBox="0 0 13 13"><path d="M0.9 5.8 L5.1 10.2 L11.6 1.8" fill="none" stroke="#111" stroke-width="2.3"/></svg>
<svg class="a" style="left:1458.3px;top:768.7px;" width="13" height="13" viewBox="0 0 13 13"><path d="M0.9 5.8 L5.1 10.2 L11.6 1.8" fill="none" stroke="#111" stroke-width="2.3"/></svg>
<div class="a" style="left:90.00px;top:793.33px;font-size:15.5px;line-height:19px;transform:scaleX(0.8841);transform-origin:0 0;color:#2a66a3;">FURN_FIX-000004</div>
<div class="a" style="left:253.90px;top:793.33px;font-size:15.5px;line-height:19px;transform:scaleX(0.9640);transform-origin:0 0;color:#1e1e1e;">Filing cabinet - 36&quot; lateral</div>
<div class="a" style="left:473.80px;top:793.33px;font-size:15.5px;line-height:19px;transform:scaleX(0.8404);transform-origin:0 0;color:#1e1e1e;">FURN_FIX</div>
<div class="a" style="left:637.70px;top:793.33px;font-size:15.5px;line-height:19px;transform:scaleX(0.9474);transform-origin:0 0;color:#1e1e1e;">Tangible</div>
<div class="a" style="left:857.40px;top:793.33px;font-size:15.5px;line-height:19px;transform:scaleX(0.8502);transform-origin:0 0;color:#1e1e1e;">WHOUSE_1ST</div>
<div class="a" style="left:1021.30px;top:793.33px;font-size:15.5px;line-height:19px;transform:scaleX(0.8856);transform-origin:0 0;color:#1e1e1e;">Theresa Jayne</div>
<svg class="a" style="left:1246px;top:796.2px;" width="13" height="13" viewBox="0 0 13 13"><path d="M0.9 5.8 L5.1 10.2 L11.6 1.8" fill="none" stroke="#111" stroke-width="2.3"/></svg>
<svg class="a" style="left:1458.3px;top:796.2px;" width="13" height="13" viewBox="0 0 13 13"><path d="M0.9 5.8 L5.1 10.2 L11.6 1.8" fill="none" stroke="#111" stroke-width="2.3"/></svg>
<div class="a" style="left:90.00px;top:820.83px;font-size:15.5px;line-height:19px;transform:scaleX(0.8841);transform-origin:0 0;color:#2a66a3;">FURN_FIX-000005</div>
<div class="a" style="left:253.90px;top:820.83px;font-size:15.5px;line-height:19px;transform:scaleX(0.9498);transform-origin:0 0;color:#1e1e1e;">Executive desk</div>
<div class="a" style="left:473.80px;top:820.83px;font-size:15.5px;line-height:19px;transform:scaleX(0.8404);transform-origin:0 0;color:#1e1e1e;">FURN_FIX</div>
<div class="a" style="left:637.70px;top:820.83px;font-size:15.5px;line-height:19px;transform:scaleX(0.9474);transform-origin:0 0;color:#1e1e1e;">Tangible</div>
<div class="a" style="left:857.40px;top:820.83px;font-size:15.5px;line-height:19px;transform:scaleX(0.8639);transform-origin:0 0;color:#1e1e1e;">HQ_2ND_FL</div>
<div class="a" style="left:1021.30px;top:820.83px;font-size:15.5px;line-height:19px;transform:scaleX(0.8856);transform-origin:0 0;color:#1e1e1e;">Theresa Jayne</div>
<svg class="a" style="left:1246px;top:823.7px;" width="13" height="13" viewBox="0 0 13 13"><path d="M0.9 5.8 L5.1 10.2 L11.6 1.8" fill="none" stroke="#111" stroke-width="2.3"/></svg>
<svg class="a" style="left:1458.3px;top:823.7px;" width="13" height="13" viewBox="0 0 13 13"><path d="M0.9 5.8 L5.1 10.2 L11.6 1.8" fill="none" stroke="#111" stroke-width="2.3"/></svg>
<div class="a" style="left:90.00px;top:848.33px;font-size:15.5px;line-height:19px;transform:scaleX(0.8841);transform-origin:0 0;color:#2a66a3;">FURN_FIX-000006</div>
<div class="a" style="left:253.90px;top:848.33px;font-size:15.5px;line-height:19px;transform:scaleX(0.9445);transform-origin:0 0;color:#1e1e1e;">Book case</div>
<div class="a" style="left:473.80px;top:848.33px;font-size:15.5px;line-height:19px;transform:scaleX(0.8404);transform-origin:0 0;color:#1e1e1e;">FURN_FIX</div>
<div class="a" style="left:637.70px;top:848.33px;font-size:15.5px;line-height:19px;transform:scaleX(0.9474);transform-origin:0 0;color:#1e1e1e;">Tangible</div>
<div class="a" style="left:857.40px;top:848.33px;font-size:15.5px;line-height:19px;transform:scaleX(0.8639);transform-origin:0 0;color:#1e1e1e;">HQ_2ND_FL</div>
<div class="a" style="left:1021.30px;top:848.33px;font-size:15.5px;line-height:19px;transform:scaleX(0.8856);transform-origin:0 0;color:#1e1e1e;">Theresa Jayne</div>
<svg class="a" style="left:1246px;top:851.2px;" width="13" height="13" viewBox="0 0 13 13"><path d="M0.9 5.8 L5.1 10.2 L11.6 1.8" fill="none" stroke="#111" stroke-width="2.3"/></svg>
<svg class="a" style="left:1458.3px;top:851.2px;" width="13" height="13" viewBox="0 0 13 13"><path d="M0.9 5.8 L5.1 10.2 L11.6 1.8" fill="none" stroke="#111" stroke-width="2.3"/></svg>
<div class="a" style="left:90.00px;top:875.83px;font-size:15.5px;line-height:19px;transform:scaleX(0.8841);transform-origin:0 0;color:#2a66a3;">FURN_FIX-000007</div>
<div class="a" style="left:253.90px;top:875.83px;font-size:15.5px;line-height:19px;transform:scaleX(0.9493);transform-origin:0 0;color:#1e1e1e;">Arm tilter chair</div>
<div class="a" style="left:473.80px;top:875.83px;font-size:15.5px;line-height:19px;transform:scaleX(0.8404);transform-origin:0 0;color:#1e1e1e;">FURN_FIX</div>
<div class="a" style="left:637.70px;top:875.83px;font-size:15.5px;line-height:19px;transform:scaleX(0.9474);transform-origin:0 0;color:#1e1e1e;">Tangible</div>
<div class="a" style="left:857.40px;top:875.83px;font-size:15.5px;line-height:19px;transform:scaleX(0.8639);transform-origin:0 0;color:#1e1e1e;">HQ_2ND_FL</div>
<div class="a" style="left:1021.30px;top:875.83px;font-size:15.5px;line-height:19px;transform:scaleX(0.8856);transform-origin:0 0;color:#1e1e1e;">Theresa Jayne</div>
<svg class="a" style="left:1246px;top:878.7px;" width="13" height="13" viewBox="0 0 13 13"><path d="M0.9 5.8 L5.1 10.2 L11.6 1.8" fill="none" stroke="#111" stroke-width="2.3"/></svg>
<svg class="a" style="left:1458.3px;top:878.7px;" width="13" height="13" viewBox="0 0 13 13"><path d="M0.9 5.8 L5.1 10.2 L11.6 1.8" fill="none" stroke="#111" stroke-width="2.3"/></svg>
<div class="a" style="left:40px;top:170px;width:191px;height:186px;background:#fff;border:1px solid #cfcfcf;box-shadow:3px 3px 6px rgba(0,0,0,.22);"></div>
<div class="a" style="left:50.60px;top:182.09px;font-size:18.5px;line-height:23px;transform:scaleX(0.9146);transform-origin:0 0;color:#3a3a3a;">Add to workspace</div>
<div class="a" style="left:36px;top:202px;width:218px;height:151px;background:transparent;border:4px solid #000096;box-shadow:2px 2px 4px rgba(0,0,0,.3), inset 2px 2px 4px rgba(0,0,0,.12);"></div>
<div class="a" style="left:50.60px;top:215.82px;font-size:13.5px;line-height:17px;transform:scaleX(0.9855);transform-origin:0 0;color:#707070;">Workspace</div>
<div class="a" style="left:50px;top:233px;width:163px;height:26px;background:#fff;border:1px solid #3a3a3a;"></div>
<div class="a" style="left:59.30px;top:236.30px;font-size:15px;line-height:19px;transform:scaleX(0.9734);transform-origin:0 0;color:#1e1e1e;">Assets Management</div>
<svg class="a" style="left:193.3px;top:241.6px;" width="15.4" height="9.7" viewBox="0 0 15.4 9.7"><path d="M1 1 L7.7 8.7 L14.4 1" fill="none" stroke="#444" stroke-width="1.2"/></svg>
<div class="a" style="left:50.60px;top:267.82px;font-size:13.5px;line-height:17px;transform:scaleX(0.9894);transform-origin:0 0;color:#707070;">Presentation</div>
<div class="a" style="left:50px;top:285px;width:163px;height:26px;background:#fff;border:1px solid #3a3a3a;"></div>
<div class="a" style="left:56.70px;top:289.30px;font-size:15px;line-height:19px;transform:scaleX(0.9443);transform-origin:0 0;color:#1e1e1e;">Tile</div>
<svg class="a" style="left:193.3px;top:294px;" width="15.4" height="10" viewBox="0 0 15.4 10"><path d="M1 1 L7.7 9 L14.4 1" fill="none" stroke="#444" stroke-width="1.2"/></svg>
<div class="a" style="left:50px;top:320px;width:105px;height:26px;background:#cde4f7;border:1px solid #3f94e0;"></div>
<div class="a" style="left:71.90px;top:326.32px;font-size:13.5px;line-height:17px;transform:scaleX(0.9601);transform-origin:0 0;color:#333;font-weight:bold;">Configure</div>
</body></html>
